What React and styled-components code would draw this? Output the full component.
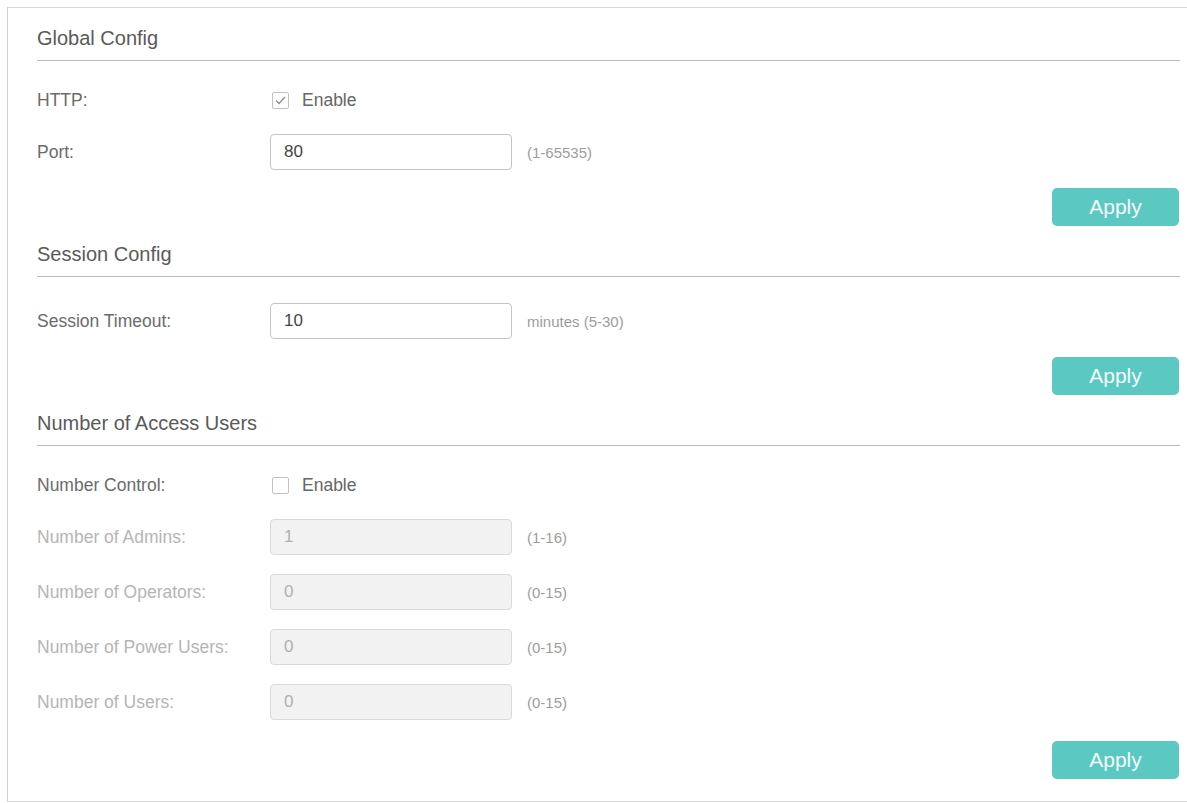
import React from 'react';
import styled, { createGlobalStyle } from 'styled-components';

const GlobalStyle = createGlobalStyle`
  html, body {
    margin: 0;
    padding: 0;
    background: #fff;
    overflow: hidden;
    font-family: "Liberation Sans", Arial, sans-serif;
  }
`;

const sections = [
  {
    title: 'Global Config',
    top: 24,
    rows: [
      { label: 'HTTP:', type: 'check', checked: true },
      { label: 'Port:', type: 'input', value: '80', hint: '(1-65535)' },
    ],
  },
  {
    title: 'Session Config',
    top: 26,
    rows: [{ label: 'Session Timeout:', type: 'input', value: '10', hint: 'minutes (5-30)' }],
  },
  {
    title: 'Number of Access Users',
    top: 24,
    last: true,
    rows: [
      { label: 'Number Control:', type: 'check', checked: false },
      { label: 'Number of Admins:', type: 'input', value: '1', hint: '(1-16)', disabled: true },
      { label: 'Number of Operators:', type: 'input', value: '0', hint: '(0-15)', disabled: true },
      { label: 'Number of Power Users:', type: 'input', value: '0', hint: '(0-15)', disabled: true },
      { label: 'Number of Users:', type: 'input', value: '0', hint: '(0-15)', disabled: true },
    ],
  },
];

const CheckBox = ({ checked }) => (
  <Box>
    {checked && (
      <svg width="11" height="9" viewBox="0 0 11 9">
        <path d="M1 4.5 L4 7.5 L10 1" fill="none" stroke="#8f8f8f" strokeWidth="1.3" />
      </svg>
    )}
  </Box>
);

const App = () => (
  <>
    <GlobalStyle />
    <Panel>
      {sections.map((s) => (
        <Section key={s.title}>
          <Heading>{s.title}</Heading>
          <Fields top={s.top}>
            {s.rows.map((r) => (
              <Row key={r.label} check={r.type === 'check'}>
                <Label disabled={r.disabled}>{r.label}</Label>
                {r.type === 'check' ? (
                  <CheckLabel>
                    <CheckBox checked={r.checked} />
                    Enable
                  </CheckLabel>
                ) : (
                  <>
                    <Input disabled={r.disabled} defaultValue={r.value} />
                    <Hint>{r.hint}</Hint>
                  </>
                )}
              </Row>
            ))}
          </Fields>
          <Actions last={s.last}>
            <ApplyButton>Apply</ApplyButton>
          </Actions>
        </Section>
      ))}
    </Panel>
  </>
);

export default App;

const Panel = styled.div`
  margin: 7px 0 0 7px;
  width: 1200px;
  box-sizing: border-box;
  border: 1px solid #d8d8d8;
  border-left-color: #cfcfcf;
  padding: 18px 0 22px 29px;
`;

const Section = styled.section`
  width: 1143px;
  & + & {
    margin-top: 16px;
  }
`;

const Heading = styled.h2`
  margin: 0;
  font-size: 20px;
  line-height: 24px;
  font-weight: 400;
  color: #5a5a5a;
  padding-bottom: 10px;
  border-bottom: 1px solid #b9b9b9;
`;

const Fields = styled.div`
  display: flex;
  flex-direction: column;
  gap: 19px;
  padding-top: ${({ top }) => top}px;
`;

const Row = styled.div`
  display: flex;
  align-items: center;
  height: ${({ check }) => (check ? 30 : 36)}px;
`;

const Label = styled.span`
  width: 233px;
  flex: none;
  font-size: 17.5px;
  color: ${({ disabled }) => (disabled ? '#b5b5b5' : '#6b6b6b')};
`;

const CheckLabel = styled.label`
  display: flex;
  align-items: center;
  gap: 13px;
  margin-left: 2px;
  font-size: 17.5px;
  color: #666;
`;

const Box = styled.span`
  width: 15px;
  height: 15px;
  border: 1px solid #c2c2c2;
  border-radius: 2px;
  display: flex;
  align-items: center;
  justify-content: center;
  background: #fff;
`;

const Input = styled.input`
  width: 242px;
  height: 36px;
  box-sizing: border-box;
  border: 1px solid ${({ disabled }) => (disabled ? '#dadada' : '#c4c4c4')};
  border-radius: 4px;
  background: ${({ disabled }) => (disabled ? '#f2f2f2' : '#fff')};
  padding: 0 13px;
  font-family: inherit;
  font-size: 17px;
  color: ${({ disabled }) => (disabled ? '#b0b0b0' : '#444')};
  -webkit-text-fill-color: ${({ disabled }) => (disabled ? '#b0b0b0' : '#444')};
  opacity: 1;
  outline: none;
`;

const Hint = styled.span`
  margin-left: 15px;
  font-size: 15px;
  color: #9d9d9d;
`;

const Actions = styled.div`
  display: flex;
  justify-content: flex-end;
  margin-top: ${({ last }) => (last ? 21 : 18)}px;
  padding-right: 1px;
`;

const ApplyButton = styled.button`
  width: 127px;
  height: 38px;
  border: none;
  border-radius: 5px;
  background: #5cc8c2;
  color: #f4fcfc;
  font-family: inherit;
  font-size: 21px;
  padding: 0;
  cursor: pointer;
`;
